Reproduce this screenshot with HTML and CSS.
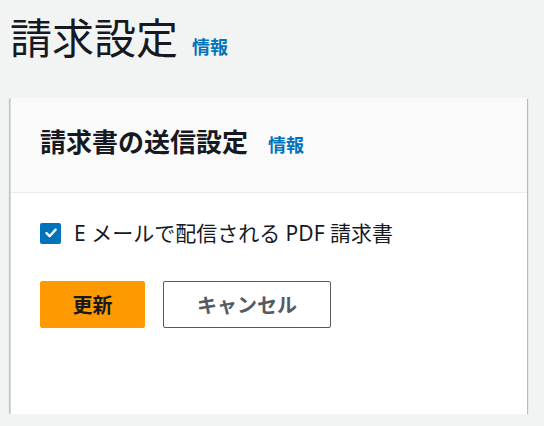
FILE: index.html
```html
<!DOCTYPE html>
<html>
<head>
    <title>請求設定</title>
    <link rel="stylesheet" href="styles.css">
</head>
<body>
    <div class="page-header">
        <h1>請求設定</h1>
        <a class="info-link" href="#">情報</a>
    </div>

    <div class="panel">
        <div class="panel-header">
            <h2>請求書の送信設定</h2>
            <a class="info-link" href="#">情報</a>
        </div>
        <div class="panel-body">
            <label class="check-row">
                <span class="checkbox">
                    <svg width="14" height="14" viewBox="0 0 14 14">
                        <path d="M2.5 7.2 L5.6 10.2 L11.6 3.6" fill="none" stroke="#fff" stroke-width="2.4" stroke-linecap="round" stroke-linejoin="round"/>
                    </svg>
                </span>
                <span class="check-label">E メールで配信される PDF 請求書</span>
            </label>
            <div class="actions">
                <button class="btn btn-primary">更新</button>
                <button class="btn btn-secondary">キャンセル</button>
            </div>
        </div>
    </div>
</body>
</html>
```

FILE: styles.css
```css
body {
    margin: 0;
    padding: 13px 17px 0 10px;
    background: #f2f3f3;
    font-family: "Noto Sans", "Noto Sans CJK JP", sans-serif;
    color: #16191f;
}
.page-header {
    display: flex;
    align-items: baseline;
    gap: 14px;
    height: 85px;
}
.page-header h1 {
    margin: 0;
    font-size: 42px;
    font-weight: 400;
    line-height: 50px;
}
.info-link {
    color: #0073bb;
    font-size: 18px;
    font-weight: 700;
    text-decoration: none;
}
.panel {
    background: #fff;
    border-left: 1px solid #d5dbdb;
    box-shadow: 0 1px 1px 0 rgba(0, 28, 36, 0.4), 1px 1px 1px 0 rgba(0, 28, 36, 0.2), -1px 1px 1px 0 rgba(0, 28, 36, 0.15);
    height: 316px;
}
.panel-header {
    display: flex;
    align-items: baseline;
    gap: 20px;
    background: #fafafa;
    border-bottom: 1px solid #eaeded;
    padding: 28px 29px 0;
    height: 66px;
}
.panel-header h2 {
    margin: 0;
    font-size: 26px;
    font-weight: 700;
    line-height: 32px;
}
.panel-body {
    padding: 27px 29px;
}
.check-row {
    display: flex;
    align-items: center;
    gap: 13px;
}
.checkbox {
    display: flex;
    align-items: center;
    justify-content: center;
    width: 21px;
    height: 21px;
    border-radius: 2px;
    background: #0073bb;
}
.check-label {
    font-size: 21px;
    line-height: 26px;
}
.actions {
    display: flex;
    gap: 18px;
    margin-top: 35px;
}
.btn {
    height: 47px;
    border-radius: 2px;
    font-family: inherit;
    font-size: 20px;
    font-weight: 700;
    padding: 0;
}
.btn-primary {
    width: 105px;
    background: #ff9900;
    border: 1px solid #ff9900;
    color: #16191f;
}
.btn-secondary {
    width: 168px;
    background: #fff;
    border: 1px solid #545b64;
    color: #545b64;
}
```
